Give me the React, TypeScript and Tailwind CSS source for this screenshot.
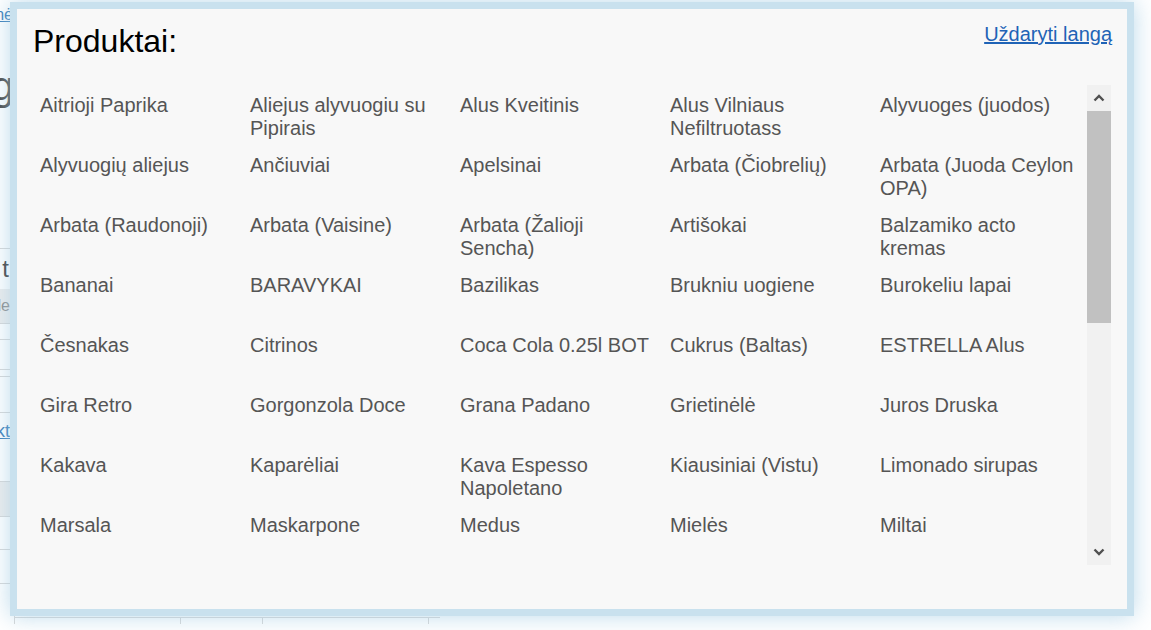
import type { ReactNode } from "react";

const products: string[] = [
  "Aitrioji Paprika",
  "Aliejus alyvuogiu su Pipirais",
  "Alus Kveitinis",
  "Alus Vilniaus Nefiltruotass",
  "Alyvuoges (juodos)",
  "Alyvuogių aliejus",
  "Ančiuviai",
  "Apelsinai",
  "Arbata (Čiobrelių)",
  "Arbata (Juoda Ceylon OPA)",
  "Arbata (Raudonoji)",
  "Arbata (Vaisine)",
  "Arbata (Žalioji Sencha)",
  "Artišokai",
  "Balzamiko acto kremas",
  "Bananai",
  "BARAVYKAI",
  "Bazilikas",
  "Brukniu uogiene",
  "Burokeliu lapai",
  "Česnakas",
  "Citrinos",
  "Coca Cola 0.25l BOT",
  "Cukrus (Baltas)",
  "ESTRELLA Alus",
  "Gira Retro",
  "Gorgonzola Doce",
  "Grana Padano",
  "Grietinėlė",
  "Juros Druska",
  "Kakava",
  "Kaparėliai",
  "Kava Espesso Napoletano",
  "Kiausiniai (Vistu)",
  "Limonado sirupas",
  "Marsala",
  "Maskarpone",
  "Medus",
  "Mielės",
  "Miltai",
  "Mocarela",
  "Morkos",
  "Obuoliai",
  "Parmezanas",
  "Pienas",
];

function Chevron({ up }: { up?: boolean }) {
  return (
    <svg width="12" height="8" viewBox="0 0 12 8" className="text-[#505050]">
      <polyline
        points={up ? "1.5,6.5 6,2 10.5,6.5" : "1.5,1.5 6,6 10.5,1.5"}
        fill="none"
        stroke="currentColor"
        strokeWidth="2.4"
      />
    </svg>
  );
}

// Strip of the page that peeks out behind the modal on the left edge.
function BgRow({
  h,
  children,
  className = "",
}: {
  h: string;
  children?: ReactNode;
  className?: string;
}) {
  return (
    <div className={`flex shrink-0 items-center border-b border-[#d6d6d6] ${h} ${className}`}>
      {children}
    </div>
  );
}

export default function App() {
  return (
    <div className="relative h-[630px] w-[1151px] overflow-hidden bg-white font-['Liberation_Sans',Arial,sans-serif]">
      {/* page behind the dialog */}
      <div className="flex w-[440px] flex-col">
        <div className="flex h-[24px] w-[13px] items-end justify-end whitespace-nowrap text-[16px] leading-[18px] text-[#337ab7] underline">
          Pradinė
        </div>
        <div className="flex h-[84px] w-[14px] items-end justify-end whitespace-nowrap text-[40px] leading-[44px] text-[#444]">
          Užsakymo redag
        </div>
        <div className="h-[112px]" />
        <BgRow h="h-[29px]" />
        <BgRow h="h-[40px]" className="border-b-0">
          <div className="flex w-[9px] justify-end whitespace-nowrap text-[24px] text-[#333]">Kiekis t</div>
        </BgRow>
        <BgRow h="h-[35px]" className="bg-[#ececec]">
          <div className="flex w-[10px] justify-end whitespace-nowrap text-[16px] text-[#888]">Pavade</div>
        </BgRow>
        <BgRow h="h-[16px]" />
        <BgRow h="h-[30px]" />
        <BgRow h="h-[7px]" />
        <BgRow h="h-[36px]" />
        <div className="flex h-[36px] items-center">
          <div className="flex w-[10px] justify-end whitespace-nowrap text-[18px] text-[#337ab7] underline">
            Produkt
          </div>
        </div>
        <BgRow h="h-[33px]" />
        <BgRow h="h-[35px]" className="bg-[#ececec]" />
        <BgRow h="h-[33px]" />
        <BgRow h="h-[34px]" />
        <div className="flex h-[40px] border-[#d6d6d6]">
          <div className="h-full w-[15px] border-r border-[#d6d6d6]" />
          <div className="flex h-full flex-1 flex-col">
            <div className="h-[34px] border-b border-[#d6d6d6]" />
            <div className="flex flex-1">
              <div className="w-[166px] border-r border-[#d6d6d6]" />
              <div className="w-[82px] border-r border-[#d6d6d6]" />
              <div className="w-[166px] border-r border-[#d6d6d6]" />
            </div>
          </div>
        </div>
      </div>

      {/* dialog */}
      <div className="absolute left-[10px] top-[2px] flex h-[614px] w-[1124px] flex-col border-[7px] border-[#c9e1ee] bg-[#f8f8f8] px-[16px] pt-[14px] shadow-[0_0_22px_rgba(165,205,228,0.75)]">
        <div className="flex items-start justify-between">
          <h2 className="text-[32px] leading-[37px] text-black">Produktai:</h2>
          <a href="#" className="mr-[-1px] text-[20px] leading-[23px] text-[#1f63b6] underline">
            Uždaryti langą
          </a>
        </div>

        <div className="mt-[25px] flex h-[480px]">
          <div className="grid flex-1 auto-rows-[60px] grid-cols-[repeat(5,210px)] content-start overflow-hidden">
            {products.map((p) => (
              <div
                key={p}
                className="cursor-pointer px-[7px] pt-[9px] text-[20px] leading-[23px] text-[#555]"
              >
                {p}
              </div>
            ))}
          </div>

          <div className="flex w-[24px] flex-col bg-[#f1f1f1]">
            <div className="flex h-[26px] items-center justify-center">
              <Chevron up />
            </div>
            <div className="h-[212px] bg-[#c1c1c1]" />
            <div className="flex-1" />
            <div className="flex h-[26px] items-center justify-center">
              <Chevron />
            </div>
          </div>
        </div>
      </div>
    </div>
  );
}
